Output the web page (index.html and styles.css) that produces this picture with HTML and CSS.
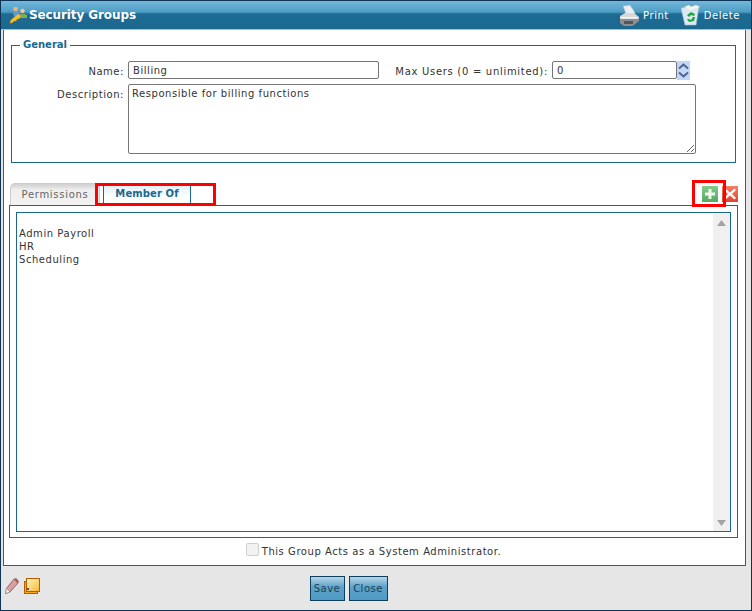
FILE: index.html
```html
<!DOCTYPE html>
<html lang="en">
<head>
<meta charset="utf-8">
<title>Security Groups</title>
<link rel="stylesheet" href="styles.css">
</head>
<body>
<div class="window">
  <header class="titlebar">
    <div class="title">
      <svg class="title-icon" width="18" height="18" viewBox="0 0 18 18">
        <circle cx="13.500" cy="5" r="2.200" fill="#f3c58f"/><path d="M11 8h5l2 1v3h-7z" fill="#7db04a"/>
        <circle cx="6.500" cy="3" r="2.300" fill="#e8b58a"/><path d="M4 5h5l3 4-3 2-1 1-3-2-1-3z" fill="#5f9ad8"/>
        <path d="M1 17l1-3 7-6 3 2-2 3-2 0-1 2-2 0-2 2z" fill="#f1c232" stroke="#c9971c" stroke-width=".6"/>
      </svg>
      <span>Security Groups</span>
    </div>
    <div class="actions">
      <span class="action">
        <svg width="19" height="21" viewBox="0 0 19 21">
          <path d="M3 1l7-1 4 6 1 3H6z" fill="#e9eff5" stroke="#a7b2bb" stroke-width=".6"/>
          <path d="M0 11l5-3h9l5 4v4H0z" fill="#d6d8da"/>
          <path d="M0 14h19v2l-5 4-2 1H4l-4-3z" fill="#8b8f92"/>
          <path d="M4 16h9v3H4z" fill="#53575a"/>
          <path d="M1 12h16v1.500H1z" fill="#f1f2f3"/>
        </svg>
        <span>Print</span>
      </span>
      <span class="action">
        <svg width="19" height="21" viewBox="0 0 19 21">
          <path d="M0 3l18-2-3 19H4z" fill="#dbe9f5" stroke="#a9c2d6" stroke-width=".6"/>
          <path d="M3 2l5-2 2 2 5-2 4 2-9 3z" fill="#f6f6e6"/>
          <path d="M6 10l4-3 4 2-1 2-3-1-2 2zM14 12l-1 4-5 1-2-3 2 0 2 1 2-3z" fill="#1fa53a"/>
        </svg>
        <span>Delete</span>
      </span>
    </div>
  </header>

  <main class="content">
    <fieldset class="general">
      <legend>General</legend>
      <div class="row row-name">
        <label class="label">Name:</label>
        <input class="field field-name" type="text" value="Billing">
        <label class="label-max">Max Users (0 = unlimited):</label>
        <input class="field field-max" type="text" value="0">
        <span class="spinner">
          <svg width="13" height="19" viewBox="0 0 13 19">
            <path d="M2 7.500l4.500-4 4.500 4" fill="none" stroke="#4a6390" stroke-width="2"/>
            <path d="M2 11.500l4.500 4 4.500-4" fill="none" stroke="#4a6390" stroke-width="2"/>
          </svg>
        </span>
      </div>
      <div class="row row-desc">
        <label class="label">Description:</label>
        <textarea class="field field-desc">Responsible for billing functions</textarea>
      </div>
    </fieldset>

    <div class="tabbar">
      <div class="tabs">
        <span class="tab tab-off">Permissions</span>
        <span class="tab tab-on">Member Of</span>
      </div>
      <div class="tab-tools">
        <span class="tool tool-add">
          <svg width="16" height="16" viewBox="0 0 16 16"><path d="M6.500 3h3v3.500H13v3H9.500V13h-3V9.500H3v-3h3.500z" fill="#eef8ee"/></svg>
        </span>
        <span class="tool tool-del">
          <svg width="16" height="16" viewBox="0 0 16 16"><path d="M3.500 2.500L8 6.500l4.500-4 1.500 1.500-4 4 4 4-1.500 1.500L8 9.500l-4.500 4L2 12l4-4-4-4z" fill="#fff"/></svg>
        </span>
      </div>
    </div>

    <section class="tabpanel">
      <div class="listbox">
        <ul class="list">
          <li>Admin Payroll</li>
          <li>HR</li>
          <li>Scheduling</li>
        </ul>
        <div class="scroll">
          <svg width="9" height="6" viewBox="0 0 9 6"><path d="M4.500 0L9 6H0z" fill="#a3a3a3"/></svg>
          <svg width="9" height="6" viewBox="0 0 9 6"><path d="M0 0h9L4.500 6z" fill="#a3a3a3"/></svg>
        </div>
      </div>
    </section>

    <div class="admin-row">
      <span class="checkbox"></span>
      <span>This Group Acts as a System Administrator.</span>
    </div>
  </main>

  <footer class="footer">
    <div class="footer-icons">
      <svg width="14" height="16" viewBox="0 0 14 16">
        <path d="M.5 15.500l1-5L8.500 1.500c1-1 3-1 4 .5s1 2.500 0 3.500L5 14z" fill="#d9a0a0" stroke="#8a4a4a" stroke-width=".8"/>
        <path d="M.5 15.500l1-5L5 14z" fill="#f6f0e8" stroke="#8d8d8d" stroke-width=".5"/>
        <path d="M9 1.500c1-1 3-1 3.500.5s1 2.500 0 3.500z" fill="#a85a5a"/>
      </svg>
      <svg width="16" height="16" viewBox="0 0 16 16">
        <rect x=".5" y="3.500" width="13" height="12" fill="#f5a623" stroke="#b85c00"/>
        <defs><linearGradient id="note" x1="0" y1="0" x2="1" y2="1"><stop offset="0" stop-color="#fff6c8"/><stop offset="1" stop-color="#f9b52a"/></linearGradient></defs>
        <rect x="2.500" y=".5" width="13" height="13" fill="url(#note)" stroke="#b85c00"/>
        <rect x="3" y="10" width="2" height="2" fill="#45597a"/>
      </svg>
    </div>
    <div class="buttons">
      <button class="btn btn-save" type="button">Save</button>
      <button class="btn btn-close" type="button">Close</button>
    </div>
  </footer>

  <div class="mark mark-tab"></div>
  <div class="mark mark-add"></div>
</div>
</body>
</html>
```
FILE: styles.css
```css
* { box-sizing: border-box; }
html, body { margin: 0; padding: 0; }
body { font-family: "DejaVu Sans", Verdana, sans-serif; font-size: 10px; letter-spacing: .55px; color: #333; background: #e6e6e6; }

.window {
  position: relative;
  width: 752px;
  height: 611px;
  display: flex;
  flex-direction: column;
  background: #e6e6e6;
  border: 1px solid #0f3355;
  overflow: hidden;
}

.titlebar {
  height: 29px;
  flex: none;
  display: flex;
  justify-content: space-between;
  align-items: center;
  padding: 0 11px 0 8px;
  background: linear-gradient(#72b8da 0, #4f9dc4 11px, #1d6a93 13px, #1b688f 100%);
  border-bottom: 1px solid #9cc3e6;
  color: #fff;
}
.title { display: flex; align-items: center; gap: 2px; font-size: 12px; font-weight: bold; letter-spacing: -.1px; }
.title-icon { display: block; }
.actions { display: flex; align-items: center; gap: 12px; }
.action { display: flex; align-items: center; gap: 4px; }
.action svg { display: block; }

.content {
  flex: none;
  height: 536px;
  margin: 0 5px 0 2px;
  padding: 9px 7px 0 5px;
  background: #fff;
  border: 1px solid #1b688f;
  border-top: 0;
  display: flex;
  flex-direction: column;
}

.general {
  height: 124px;
  flex: none;
  margin: 0 2px;
  padding: 0;
  border: 1px solid #1b688f;
}
.general legend {
  margin-left: 8px;
  padding: 0 3px;
  color: #1b688f;
  font-weight: bold;
  letter-spacing: 0;
  line-height: 12px;
}
.row { display: flex; }
.row-name { height: 19px; margin-top: 10px; align-items: flex-start; }
.row-desc { margin-top: 4px; }
.label { width: 112px; text-align: right; margin-right: 4px; line-height: 21px; flex: none; }
.label-max { width: 169px; text-align: right; margin-right: 4px; line-height: 21px; letter-spacing: .7px; flex: none; }
.field {
  border: 1px solid #767676;
  border-radius: 2px;
  background: #fff;
  font: 10px "DejaVu Sans", Verdana, sans-serif;
  letter-spacing: .55px;
  color: #333;
  margin: 0;
  padding: 1px 4px 0;
  display: block;
  flex: none;
}
.field-name { width: 251px; height: 18px; }
.field-max { width: 125px; height: 18px; }
.spinner { width: 13px; height: 19px; background: #c3d6f5; display: block; flex: none; }
.spinner svg { display: block; }
.field-desc { width: 568px; height: 70px; padding: 3px 3px 0; resize: both; }

.tabbar {
  height: 27px;
  flex: none;
  margin-top: 15px;
  display: flex;
  justify-content: space-between;
  align-items: flex-end;
}
.tabs { display: flex; align-items: flex-end; gap: 3px; margin-bottom: -1px; margin-left: 1px; }
.tab { display: block; height: 23px; line-height: 22px; text-align: center; }
.tab-off {
  width: 90px;
  color: #666;
  letter-spacing: .7px;
  border: 1px solid #ccc;
  border-bottom: 0;
  border-radius: 5px 5px 0 0;
  background: linear-gradient(#d0d0d0, #efefef 6px, #f2f2f2);
}
.tab-on {
  width: 88px;
  color: #1b688f;
  font-weight: bold;
  letter-spacing: .1px;
  border: 1px solid #1b688f;
  border-width: 0 1px 1px;
  border-bottom-color: #fff;
  background: linear-gradient(#d9ecf5, #fff 14px);
}
.tab-tools { display: flex; gap: 4px; margin-bottom: 3px; }
.tool { width: 16px; height: 16px; display: block; }
.tool svg { display: block; }
.tool-add { background: linear-gradient(#86c98b, #55a862); }
.tool-del { background: linear-gradient(#f47f68, #e2432f); }

.tabpanel {
  height: 333px;
  flex: none;
  padding: 6px;
  border: 1px solid #1b688f;
}
.listbox {
  height: 320px;
  border: 1px solid #1b688f;
  display: flex;
}
.list {
  flex: 1;
  list-style: none;
  margin: 0;
  padding: 14px 0 0 2px;
  line-height: 13px;
}
.scroll {
  width: 17px;
  background: #f0f0f0;
  display: flex;
  flex-direction: column;
  justify-content: space-between;
  align-items: center;
  padding: 7px 0 5px;
}
.scroll svg { display: block; }

.admin-row {
  flex: 1;
  display: flex;
  align-items: center;
  justify-content: center;
  gap: 3px;
}
.checkbox { width: 13px; height: 13px; margin-bottom: 4px; border: 1px solid #cfcfcf; border-radius: 2px; background: #f2f2f2; display: block; }

.footer {
  flex: 1;
  display: flex;
  position: relative;
  justify-content: center;
  align-items: flex-start;
  padding-top: 10px;
  padding-right: 55px;
}
.footer-icons { position: absolute; left: 4px; top: 12px; display: flex; gap: 5px; }
.footer-icons svg { display: block; }
.buttons { display: flex; gap: 4px; }
.btn {
  height: 25px;
  border: 1px solid #0f3f5f;
  background: linear-gradient(#b9d6e6, #5ba2c9 10px, #4f9bc5);
  font: 10px "DejaVu Sans", Verdana, sans-serif;
  letter-spacing: .5px;
  color: #1f3f55;
  padding: 0;
  margin: 0;
}
.btn-save { width: 35px; }
.btn-close { width: 39px; }

.mark { position: absolute; border: 3px solid #f00; pointer-events: none; }
.mark-tab { left: 94px; top: 182px; width: 121px; height: 23px; }
.mark-add { left: 691px; top: 179px; width: 34px; height: 27px; }
```
